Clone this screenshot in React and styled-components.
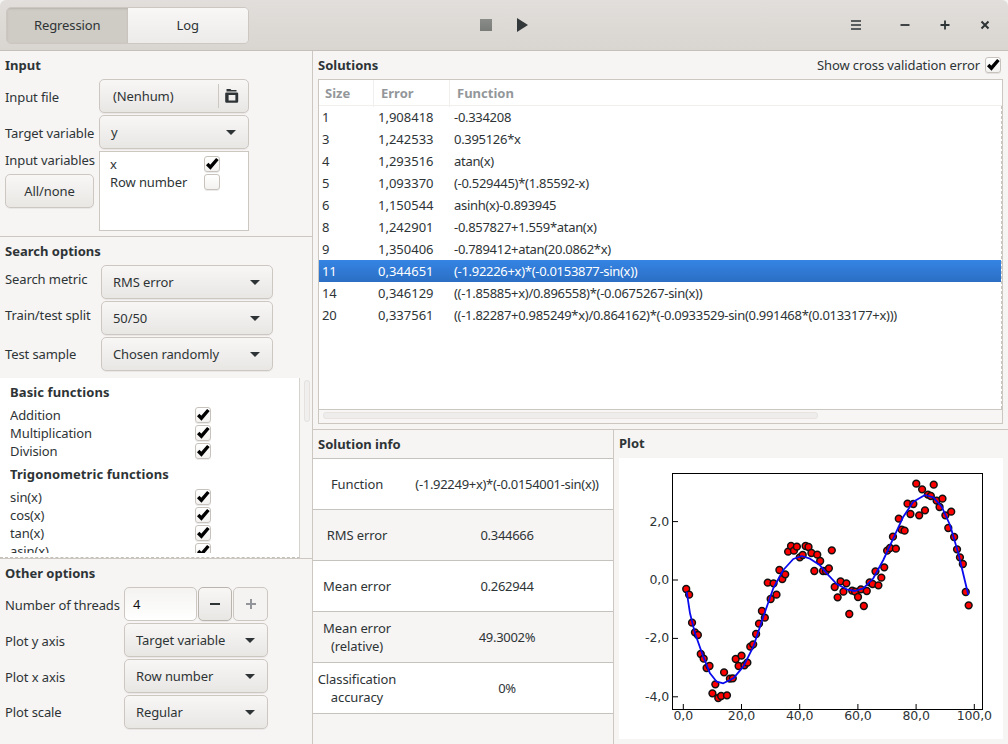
import React from "react";
import styled, { createGlobalStyle } from "styled-components";

const GlobalStyle = createGlobalStyle`
  html, body { margin: 0; padding: 0; background: #f6f5f4; }
  * { box-sizing: border-box; }
`;

const solutions = [
  ["1", "1,908418", "-0.334208"],
  ["3", "1,242533", "0.395126*x"],
  ["4", "1,293516", "atan(x)"],
  ["5", "1,093370", "(-0.529445)*(1.85592-x)"],
  ["6", "1,150544", "asinh(x)-0.893945"],
  ["8", "1,242901", "-0.857827+1.559*atan(x)"],
  ["9", "1,350406", "-0.789412+atan(20.0862*x)"],
  ["11", "0,344651", "(-1.92226+x)*(-0.0153877-sin(x))"],
  ["14", "0,346129", "((-1.85885+x)/0.896558)*(-0.0675267-sin(x))"],
  ["20", "0,337561", "((-1.82287+0.985249*x)/0.864162)*(-0.0933529-sin(0.991468*(0.0133177+x)))"],
];

const infoRows = [
  [["Function"], "(-1.92249+x)*(-0.0154001-sin(x))"],
  [["RMS error"], "0.344666"],
  [["Mean error"], "0.262944"],
  [["Mean error", "(relative)"], "49.3002%"],
  [["Classification", "accuracy"], "0%"],
];

// y of each data point, row number 1..98, in thirds of a pixel from y=460
const pointY = [
  387, 404, 488, 517, 525, 582, 596, 624, 618, 700, 673, 714, 708, 637, 706, 656, 655, 597, 618, 587,
  616, 608, 560, 553, 522, 491, 453, 473, 368, 417, 370, 404, 330, 357, 343, 275, 258, 272, 260, 292,
  285, 258, 261, 279, 333, 284, 303, 333, 333, 325, 271, 381, 412, 364, 395, 370, 462, 392, 395, 411,
  388, 438, 393, 367, 372, 334, 376, 353, 322, 272, 264, 230, 266, 176, 209, 212, 131, 162, 132, 71,
  166, 88, 151, 104, 108, 74, 122, 141, 116, 166, 204, 155, 231, 268, 292, 312, 396, 436,
];

// model curve traced through the points, in the same thirds of a pixel from x=620, y=460
const curve = [
  [200, 395], [210, 460], [225, 520], [250, 590], [270, 640], [290, 665], [310, 670], [340, 655],
  [370, 620], [400, 560], [430, 470], [460, 385], [490, 330], [520, 297], [545, 288], [570, 296],
  [600, 316], [620, 340], [650, 372], [680, 388], [705, 393], [730, 385], [760, 355], [790, 300],
  [820, 235], [850, 170], [880, 125], [915, 105], [940, 112], [965, 140], [990, 195], [1015, 280],
  [1045, 405],
];

const curvePath = curve.map(([x, y], i) => `${i ? "L" : "M"}${(620 + x / 3 - 619).toFixed(1)} ${(460 + y / 3 - 458).toFixed(1)}`).join(" ");

const xTicks = [0, 20, 40, 60, 80, 100];
const yTicks = [2, 0, -2, -4];
const tickX = (v) => 64.3 + v * 2.91;
const tickY = (v) => 122 - v * 29.2;

const CheckMark = ({ checked = true }) => (
  <CheckBox>
    {checked && (
      <svg width="16" height="16" viewBox="0 0 16 16">
        <path d="M3.2 8 L6.4 11.2 L13.4 3" fill="none" stroke="#000" strokeWidth="3.4" />
      </svg>
    )}
  </CheckBox>
);

const Caret = () => <Arrow />;

const ComboBox = ({ label }) => (
  <Combo>
    <span>{label}</span>
    <Caret />
  </Combo>
);

const FunctionRow = ({ label }) => (
  <FnRow>
    <span>{label}</span>
    <CheckMark />
  </FnRow>
);

const Plot = () => (
  <svg width="384" height="281" viewBox="0 0 384 281">
    <rect x="53.5" y="15.5" width="310" height="236" fill="#fff" stroke="#000" strokeWidth="1" />
    {xTicks.map((v) => (
      <g key={v}>
        <line x1={tickX(v)} x2={tickX(v)} y1="246" y2="251" stroke="#000" />
        <text x={tickX(v)} y="262" textAnchor="middle" fontSize="12.5" fill="#2e3436" fontFamily="DejaVu Sans, sans-serif">
          {v.toFixed(1).replace(".", ",")}
        </text>
      </g>
    ))}
    {yTicks.map((v) => (
      <g key={v}>
        <line x1="54" x2="59" y1={tickY(v)} y2={tickY(v)} stroke="#000" />
        <text x="50" y={tickY(v) + 4} textAnchor="end" fontSize="12.5" fill="#2e3436" fontFamily="DejaVu Sans, sans-serif">
          {v.toFixed(1).replace(".", ",")}
        </text>
      </g>
    ))}
    {pointY.map((y, i) => (
      <circle
        key={i}
        cx={1 + 63.3 + 2.912 * (i + 1)}
        cy={2 + y / 3}
        r="3.4"
        fill="#f00"
        stroke="#111"
        strokeWidth="1.5"
      />
    ))}
    <path d={curvePath} fill="none" stroke="#0a0aee" strokeWidth="1.8" strokeLinejoin="round" />
  </svg>
);

const App = () => (
  <>
    <GlobalStyle />
    <Window>
      <HeaderBar>
        <Switcher>
          <SwitchTab $active>Regression</SwitchTab>
          <SwitchTab>Log</SwitchTab>
        </Switcher>
        <RunControls>
          <StopIcon />
          <PlayIcon />
        </RunControls>
        <WindowControls>
          <MenuIcon width="12" height="12" viewBox="0 0 12 12">
            <path d="M1 2h10M1 6h10M1 10h10" stroke="#2e3436" strokeWidth="1.6" fill="none" />
          </MenuIcon>
          <svg width="12" height="12" viewBox="0 0 12 12">
            <path d="M1.5 6h9" stroke="#2e3436" strokeWidth="1.8" fill="none" />
          </svg>
          <svg width="12" height="12" viewBox="0 0 12 12">
            <path d="M1.5 6h9M6 1.5v9" stroke="#2e3436" strokeWidth="1.8" fill="none" />
          </svg>
          <svg width="12" height="12" viewBox="0 0 12 12">
            <path d="M2.5 2.5l7 7M9.5 2.5l-7 7" stroke="#2e3436" strokeWidth="2" fill="none" />
          </svg>
        </WindowControls>
      </HeaderBar>

      <Body>
        <LeftColumn>
          <InputSection>
            <SectionTitle>Input</SectionTitle>
            <InputGrid>
              <FieldLabel $offset={1}>Input file</FieldLabel>
              <FileButton>
                <span>(Nenhum)</span>
                <FileIconCell>
                  <svg width="16" height="16" viewBox="0 0 16 16">
                    <path d="M2.5 1h4l.8 1h5.2v1.6h-10z" fill="#2e3436" />
                    <path
                      d="M2.5 4.4h10.5a1.2 1.2 0 0 1 1.2 1.2v7.8a1.4 1.4 0 0 1-1.4 1.4H2.6a1.4 1.4 0 0 1-1.4-1.4V5.6a1.2 1.2 0 0 1 1.3-1.2z M4.6 7v5.6h6.8V7z"
                      fill="#2e3436"
                      fillRule="evenodd"
                    />
                  </svg>
                </FileIconCell>
              </FileButton>
              <FieldLabel $offset={1}>Target variable</FieldLabel>
              <ComboBox label="y" />
              <VariablesLabel>
                <span>Input variables</span>
                <PlainButton>All/none</PlainButton>
              </VariablesLabel>
              <VariableList>
                <VarRow>
                  <span>x</span>
                  <CheckMark />
                </VarRow>
                <VarRow>
                  <span>Row number</span>
                  <CheckMark checked={false} />
                </VarRow>
              </VariableList>
            </InputGrid>
          </InputSection>

          <SearchSection>
            <SectionTitle>Search options</SectionTitle>
            <SearchGrid>
              <FieldLabel $offset={-3}>Search metric</FieldLabel>
              <ComboBox label="RMS error" />
              <FieldLabel $offset={-3}>Train/test split</FieldLabel>
              <ComboBox label="50/50" />
              <FieldLabel>Test sample</FieldLabel>
              <ComboBox label="Chosen randomly" />
            </SearchGrid>
          </SearchSection>

          <FunctionScroller>
            <FunctionList>
              <FunctionClip>
                <GroupTitle>Basic functions</GroupTitle>
                <FunctionRow label="Addition" />
                <FunctionRow label="Multiplication" />
                <FunctionRow label="Division" />
                <GroupTitle $later>Trigonometric functions</GroupTitle>
                <FunctionRow label="sin(x)" />
                <FunctionRow label="cos(x)" />
                <FunctionRow label="tan(x)" />
                <FunctionRow label="asin(x)" />
              </FunctionClip>
            </FunctionList>
            <ScrollGutter>
              <ScrollThumb />
            </ScrollGutter>
          </FunctionScroller>

          <OtherSection>
            <SectionTitle>Other options</SectionTitle>
            <OtherGrid>
              <FieldLabel $offset={1}>Number of threads</FieldLabel>
              <SpinRow>
                <SpinEntry>4</SpinEntry>
                <SpinButton>
                  <svg width="14" height="14" viewBox="0 0 14 14">
                    <path d="M2 7h10" stroke="#2e3436" strokeWidth="2" />
                  </svg>
                </SpinButton>
                <SpinButton $disabled>
                  <svg width="14" height="14" viewBox="0 0 14 14">
                    <path d="M2 7h10M7 2v10" stroke="#92959a" strokeWidth="2" />
                  </svg>
                </SpinButton>
              </SpinRow>
              <FieldLabel $offset={1}>Plot y axis</FieldLabel>
              <ComboBox label="Target variable" />
              <FieldLabel $offset={1}>Plot x axis</FieldLabel>
              <ComboBox label="Row number" />
              <FieldLabel>Plot scale</FieldLabel>
              <ComboBox label="Regular" />
            </OtherGrid>
          </OtherSection>
        </LeftColumn>

        <RightColumn>
          <SolutionsPane>
            <SolutionsHead>
              <SectionTitle>Solutions</SectionTitle>
              <ShowError>
                <span>Show cross validation error</span>
                <CheckMark />
              </ShowError>
            </SolutionsHead>
            <TreeFrame>
              <TreeHead>
                <SizeHead>Size</SizeHead>
                <ErrorHead>Error</ErrorHead>
                <FunctionHead>Function</FunctionHead>
              </TreeHead>
              <TreeBody>
                {solutions.map(([size, error, fn]) => (
                  <TreeRow key={size} $selected={size === "11"}>
                    <SizeCell>{size}</SizeCell>
                    <ErrorCell>{error}</ErrorCell>
                    <FunctionCell>{fn}</FunctionCell>
                  </TreeRow>
                ))}
              </TreeBody>
              <HScrollTrack>
                <HScrollThumb />
              </HScrollTrack>
            </TreeFrame>
          </SolutionsPane>

          <LowerPanes>
            <InfoPane>
              <PaneTitle>Solution info</PaneTitle>
              <InfoTable>
                {infoRows.map(([label, value], i) => (
                  <InfoRow key={label.join()} $odd={i % 2 === 1}>
                    <InfoLabel>
                      {label.map((line) => (
                        <div key={line}>{line}</div>
                      ))}
                    </InfoLabel>
                    <InfoValue>{value}</InfoValue>
                  </InfoRow>
                ))}
              </InfoTable>
            </InfoPane>
            <PlotPane>
              <PlotTitle>Plot</PlotTitle>
              <PlotCanvas>
                <Plot />
              </PlotCanvas>
            </PlotPane>
          </LowerPanes>
        </RightColumn>
      </Body>
    </Window>
  </>
);

/* Start Styling */
const Window = styled.div`
  width: 1008px;
  height: 744px;
  overflow: hidden;
  display: flex;
  flex-direction: column;
  background: #f6f5f4;
  color: #2e3436;
  font-family: "Noto Sans", sans-serif;
  font-size: 13px;
  line-height: 18px;
  letter-spacing: -0.1px;
`;
const HeaderBar = styled.header`
  height: 51px;
  flex: none;
  display: grid;
  grid-template-columns: 1fr auto 1fr;
  align-items: center;
  padding-left: 6px;
  background: linear-gradient(#e1dedb, #d9d6d1);
  border-bottom: 1px solid #c4bfb9;
  border-radius: 6px 6px 0 0;
`;
const Switcher = styled.div`
  display: flex;
  width: 243px;
  height: 37px;
  border: 1px solid #cdc7c2;
  border-radius: 5px;
  overflow: hidden;
`;
const SwitchTab = styled.div`
  width: 50%;
  display: flex;
  align-items: center;
  justify-content: center;
  padding-bottom: 1px;
  background: ${(p) => (p.$active ? "#cfcbc5" : "linear-gradient(#f8f7f6, #ecebe9)")};
  ${(p) => p.$active && "box-shadow: inset 0 1px 2px #b8b3ad;"}
`;
const RunControls = styled.div`
  display: flex;
  align-items: center;
  gap: 25px;
  margin-left: -7px;
`;
const StopIcon = styled.div`
  width: 12px;
  height: 12px;
  background: linear-gradient(#8a8c8a, #7a7c7a);
`;
const PlayIcon = styled.div`
  width: 0;
  height: 0;
  margin-bottom: 1px;
  border-left: 11px solid #33383a;
  border-top: 7px solid transparent;
  border-bottom: 7px solid transparent;
`;
const WindowControls = styled.div`
  display: flex;
  justify-content: flex-end;
  align-items: center;
  gap: 28px;
  padding-right: 17px;
`;
const MenuIcon = styled.svg`
  margin-right: 9px;
  margin-bottom: 1px;
`;
const Body = styled.div`
  flex: 1;
  min-height: 0;
  display: flex;
`;
const LeftColumn = styled.aside`
  width: 313px;
  flex: none;
  display: flex;
  flex-direction: column;
  border-right: 1px solid #cdc7c2;
`;
const SectionTitle = styled.div`
  font-weight: 700;
  height: 18px;
  letter-spacing: 0;
`;
const InputSection = styled.section`
  height: 186px;
  padding: 5px 0 0 5px;
  border-bottom: 1px solid #cdc7c2;
`;
const InputGrid = styled.div`
  display: grid;
  grid-template-columns: 94px 150px;
  grid-template-rows: 34px 34px 80px;
  row-gap: 2px;
  margin-top: 5px;
`;
const FieldLabel = styled.label`
  display: flex;
  align-items: center;
  white-space: nowrap;
  ${(p) => p.$offset > 0 && `padding-top: ${p.$offset * 2}px;`}
  ${(p) => p.$offset < 0 && `padding-bottom: ${-p.$offset * 2}px;`}
`;
const controlFace = `
  height: 34px;
  border: 1px solid #cdc7c2;
  border-radius: 5px;
  background: linear-gradient(#f8f7f6, #e9e7e4);
  box-shadow: 0 1px 0 rgba(0, 0, 0, 0.05);
`;
const FileButton = styled.div`
  ${controlFace}
  display: flex;
  align-items: center;
  justify-content: space-between;
  padding-left: 13px;
`;
const FileIconCell = styled.div`
  width: 30px;
  height: 24px;
  display: flex;
  align-items: center;
  justify-content: center;
  padding-right: 3px;
  border-left: 1px solid #cdc7c2;
`;
const Combo = styled.div`
  ${controlFace}
  display: flex;
  align-items: center;
  justify-content: space-between;
  padding: 0 12px 0 11px;
`;
const Arrow = styled.span`
  width: 0;
  height: 0;
  border-left: 5px solid transparent;
  border-right: 5px solid transparent;
  border-top: 5px solid #2e3436;
`;
const VariablesLabel = styled.div`
  display: flex;
  flex-direction: column;
  gap: 5px;
  white-space: nowrap;
`;
const PlainButton = styled.div`
  ${controlFace}
  width: 89px;
  display: flex;
  align-items: center;
  justify-content: center;
`;
const VariableList = styled.div`
  background: #fff;
  border: 1px solid #cdc7c2;
  padding: 3px 0 0 10px;
`;
const VarRow = styled.div`
  display: grid;
  grid-template-columns: 94px 16px;
  height: 18px;
  align-items: center;
`;
const CheckBox = styled.span`
  width: 16px;
  height: 16px;
  flex: none;
  display: inline-flex;
  align-items: center;
  justify-content: center;
  background: linear-gradient(#fff, #f3f2f0);
  border: 1px solid #c8c2bc;
  border-radius: 3px;
  box-shadow: 0 1px 0 rgba(0, 0, 0, 0.08);
  svg {
    flex: none;
  }
`;
const SearchSection = styled.section`
  height: 141px;
  padding: 5px 0 0 5px;
`;
const SearchGrid = styled.div`
  display: grid;
  grid-template-columns: 96px 172px;
  grid-auto-rows: 34px;
  row-gap: 2px;
  margin-top: 5px;
`;
const FunctionScroller = styled.div`
  height: 181px;
  flex: none;
  display: flex;
  border-bottom: 1px solid #cdc7c2;
`;
const FunctionList = styled.div`
  width: 300px;
  height: 180px;
  background: #fff;
  padding: 5px 0 0 10px;
  border-right: 1px solid #d6d2cd;
  border-bottom: 1px dashed #c4bfb9;
`;
const FunctionClip = styled.div`
  height: 170px;
  overflow: hidden;
`;
const GroupTitle = styled.div`
  font-weight: 700;
  height: 18px;
  letter-spacing: 0.1px;
  margin-top: ${(p) => (p.$later ? "5px" : "0")};
  margin-bottom: 5px;
`;
const FnRow = styled.div`
  display: grid;
  grid-template-columns: 185px 16px;
  height: 18px;
  align-items: center;
`;
const ScrollGutter = styled.div`
  flex: 1;
  padding: 2px 0 0 4px;
`;
const ScrollThumb = styled.div`
  width: 6px;
  height: 42px;
  border: 1px solid #e4e1de;
  border-radius: 3px;
  background: #f1efed;
`;
const OtherSection = styled.section`
  flex: 1;
  padding: 5px 0 0 5px;
`;
const OtherGrid = styled.div`
  display: grid;
  grid-template-columns: 119px 144px;
  grid-auto-rows: 34px;
  row-gap: 2px;
  margin-top: 5px;
`;
const SpinRow = styled.div`
  display: flex;
  gap: 1px;
`;
const SpinEntry = styled.div`
  width: 73px;
  height: 34px;
  display: flex;
  align-items: center;
  padding-left: 8px;
  color: #111;
  background: linear-gradient(#f4f3f1, #fff);
  border: 1px solid #cdc7c2;
  border-radius: 5px;
`;
const SpinButton = styled.div`
  ${controlFace}
  width: 35px;
  display: flex;
  align-items: center;
  justify-content: center;
  ${(p) => (p.$disabled ? "background: #f4f3f1; box-shadow: none;" : "width: 34px; border-color: #b9b4ae;")}
`;
const RightColumn = styled.main`
  flex: 1;
  min-width: 0;
  display: flex;
  flex-direction: column;
`;
const SolutionsPane = styled.section`
  height: 379px;
  flex: none;
  padding: 0 5px 5px 5px;
  display: flex;
  flex-direction: column;
  border-bottom: 1px solid #cdc7c2;
`;
const SolutionsHead = styled.div`
  height: 28px;
  flex: none;
  display: flex;
  align-items: center;
  justify-content: space-between;
  padding: 0 2px 1px 0;
`;
const ShowError = styled.label`
  display: flex;
  align-items: center;
  gap: 5px;
`;
const TreeFrame = styled.div`
  flex: 1;
  min-height: 0;
  display: flex;
  flex-direction: column;
  background: #fff;
  border: 1px solid #cdc7c2;
`;
const TreeHead = styled.div`
  height: 26px;
  flex: none;
  display: grid;
  grid-template-columns: 55px 76px 1fr;
  align-items: stretch;
  font-weight: 700;
  letter-spacing: 0;
  color: #93979a;
  border-bottom: 1px solid #f1efed;
`;
const SizeHead = styled.div`
  padding-left: 6px;
  border-right: 1px solid #f1efed;
  line-height: 27px;
`;
const ErrorHead = styled.div`
  padding-left: 7px;
  border-right: 1px solid #f1efed;
  line-height: 27px;
`;
const FunctionHead = styled.div`
  padding-left: 7px;
  line-height: 27px;
`;
const TreeBody = styled.div`
  flex: 1;
  border-right: 1px dashed #c9c4be;
`;
const TreeRow = styled.div`
  height: 22px;
  display: grid;
  grid-template-columns: 56px 76px 1fr;
  align-items: center;
  padding-left: 3px;
  white-space: nowrap;
  ${(p) => p.$selected && "background: linear-gradient(#3584e4, #2b6fc4); color: #fff;"}
`;
const SizeCell = styled.span``;
const ErrorCell = styled.span`
  letter-spacing: 0;
`;
const FunctionCell = styled.span`
  letter-spacing: -0.3px;
`;
const HScrollTrack = styled.div`
  height: 14px;
  flex: none;
  padding: 2px 0 0 4px;
  background: #f7f6f5;
  border-top: 1px solid #cdc7c2;
`;
const HScrollThumb = styled.div`
  width: 495px;
  height: 7px;
  border: 1px solid #e6e3e0;
  border-radius: 3px;
  background: #efedeb;
`;
const LowerPanes = styled.div`
  flex: 1;
  min-height: 0;
  display: flex;
`;
const InfoPane = styled.section`
  width: 301px;
  flex: none;
  border-right: 1px solid #cdc7c2;
`;
const PaneTitle = styled.div`
  font-weight: 700;
  height: 29px;
  padding: 5px 0 0 5px;
  letter-spacing: 0;
  border-bottom: 1px solid #c6c2bd;
`;
const InfoTable = styled.div`
  display: flex;
  flex-direction: column;
`;
const InfoRow = styled.div`
  height: 51px;
  display: grid;
  grid-template-columns: 88px 1fr;
  align-items: center;
  text-align: center;
  background: ${(p) => (p.$odd ? "#f6f5f4" : "#fff")};
  border-bottom: 1px solid #c6c2bd;
`;
const InfoLabel = styled.div``;
const InfoValue = styled.div`
  letter-spacing: -0.3px;
`;
const PlotPane = styled.section`
  flex: 1;
  min-width: 0;
  padding: 0 5px 5px 5px;
  display: flex;
  flex-direction: column;
`;
const PlotTitle = styled.div`
  font-weight: 700;
  height: 28px;
  padding-top: 4px;
  letter-spacing: 0;
`;
const PlotCanvas = styled.div`
  width: 384px;
  height: 281px;
  background: #fff;
  svg {
    display: block;
  }
`;
/* End Styling */

export default App;
